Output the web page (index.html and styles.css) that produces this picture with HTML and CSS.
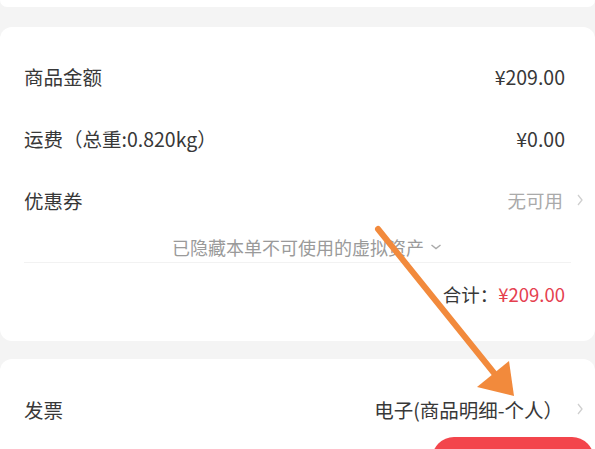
FILE: index.html
```html
<!DOCTYPE html>
<html lang="zh-CN">
<head>
<meta charset="utf-8">
<title>订单</title>
<link rel="stylesheet" href="styles.css">
</head>
<body>
<div class="page">
  <div class="prev-card"></div>
  <div class="gap gap-top"></div>
  <section class="card card-summary">
    <div class="row">
      <span class="label">商品金额</span>
      <span class="val">¥209.00</span>
    </div>
    <div class="row">
      <span class="label">运费（总重:0.820kg）</span>
      <span class="val">¥0.00</span>
    </div>
    <div class="row">
      <span class="label">优惠券</span>
      <span class="val val-link muted">无可用<svg class="chev" viewBox="0 0 8 14" width="8" height="14"><polyline points="2,2 6,7 2,12" fill="none" stroke="#cfcfcf" stroke-width="1.3"/></svg></span>
    </div>
    <div class="notice">已隐藏本单不可使用的虚拟资产<svg class="down" viewBox="0 0 12 8" width="12" height="8"><polyline points="1.5,2 6,5.5 10.5,2" fill="none" stroke="#aaa" stroke-width="1.4"/></svg></div>
    <div class="divider"></div>
    <div class="row row-total">
      <span class="total-label">合计：</span><span class="total-val">¥209.00</span>
    </div>
  </section>
  <div class="gap gap-mid"></div>
  <section class="card card-invoice">
    <div class="row">
      <span class="label">发票</span>
      <span class="val val-link">电子(商品明细-个人）<svg class="chev" viewBox="0 0 8 14" width="8" height="14"><polyline points="2,2 6,7 2,12" fill="none" stroke="#cfcfcf" stroke-width="1.3"/></svg></span>
    </div>
  </section>
  <div class="submit-btn"></div>
  <svg class="arrow" width="595" height="449" viewBox="0 0 595 449">
    <line x1="378" y1="229" x2="494" y2="373" stroke="#f28a3c" stroke-width="6" stroke-linecap="round"/>
    <polygon points="477,387 509,361 514,396" fill="#f28a3c"/>
  </svg>
</div>
</body>
</html>
```
FILE: styles.css
```css
html, body {
  margin: 0;
  padding: 0;
}
body {
  width: 595px;
  height: 449px;
  overflow: hidden;
  background: #f4f4f4;
  font-family: "Noto Sans CJK SC", "Noto Sans", sans-serif;
  color: #383838;
}
.page {
  position: relative;
  width: 595px;
  height: 449px;
  overflow: hidden;
}
.prev-card {
  height: 7px;
  background: #fff;
  border-radius: 0 0 12px 12px;
}
.gap-top {
  height: 20px;
}
.gap-mid {
  height: 18px;
}
.card {
  background: #fff;
  border-radius: 12px;
  padding: 0 11px 0 24px;
}
.card-summary {
  padding-top: 18px;
  padding-bottom: 16px;
}
.card-invoice {
  padding-top: 19px;
  height: 120px;
}
.row {
  display: flex;
  align-items: center;
  justify-content: space-between;
  height: 62px;
  font-size: 19.5px;
}
.label {
  color: #383838;
}
.val {
  display: flex;
  align-items: center;
  padding-right: 19px;
  color: #383838;
}
.val-link {
  padding-right: 0;
}
.muted {
  color: #aaa;
  font-size: 18.5px;
}
.chev {
  margin-left: 13px;
  display: block;
}
.notice {
  height: 31px;
  display: flex;
  align-items: center;
  justify-content: center;
  font-size: 18px;
  color: #9a9a9a;
  padding-left: 6px;
}
.down {
  margin-left: 6px;
  display: block;
}
.divider {
  height: 1px;
  background: #f2f2f2;
  margin-right: 13px;
}
.row-total {
  justify-content: flex-end;
  padding-right: 19px;
  font-size: 18.5px;
}
.total-label {
  color: #383838;
}
.total-val {
  color: #e5404f;
}
.submit-btn {
  position: absolute;
  left: 432px;
  top: 437px;
  width: 162px;
  height: 48px;
  border-radius: 22px;
  background: #f3454c;
}
.arrow {
  position: absolute;
  left: 0;
  top: 0;
  pointer-events: none;
}
```
